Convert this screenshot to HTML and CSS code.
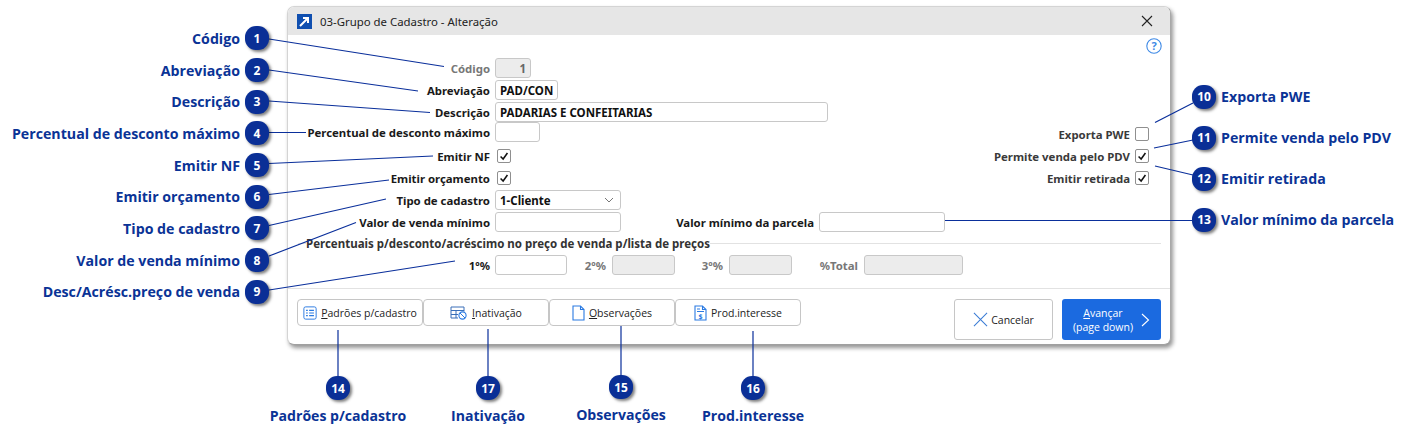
FILE: index.html
```html
<!DOCTYPE html>
<html lang="pt">
<head>
<meta charset="utf-8">
<title>03-Grupo de Cadastro</title>
<link rel="stylesheet" href="styles.css">
</head>
<body>
<main class="canvas">
  <section class="dialog">
    <header class="titlebar">
      <svg class="app-icon" viewBox="0 0 15 15"><rect width="15" height="15" fill="#0f4fb0"/><path d="M3 12 L10.5 4.5 M6 4 H11 V9" stroke="#fff" stroke-width="2" fill="none"/></svg>
      <span class="title">03-Grupo de Cadastro - Alteração</span>
      <svg class="close" viewBox="0 0 12 12"><path d="M1 1 L11 11 M11 1 L1 11" stroke="#222" stroke-width="1.1" fill="none"/></svg>
    </header>
    <div class="helpbar">
      <svg class="help" viewBox="0 0 16 16"><circle cx="8" cy="8" r="7.2" fill="none" stroke="#3f8ae6" stroke-width="1.1"/><text x="8" y="11.5" text-anchor="middle" class="help-q">?</text></svg>
    </div>
    <form class="form">
      <div class="row r-code"><label class="lbl muted">Código</label><span class="input w-code disabled num">1</span></div>
      <div class="row r-abr"><label class="lbl">Abreviação</label><span class="input w-abr">PAD/CON</span></div>
      <div class="row r-des"><label class="lbl">Descrição</label><span class="input w-des">PADARIAS E CONFEITARIAS</span></div>
      <div class="row r-per">
        <label class="lbl">Percentual de desconto máximo</label><span class="input w-per"></span>
        <div class="side"><label class="lbl-side">Exporta PWE</label><span class="check"></span></div>
      </div>
      <div class="row r-chk">
        <label class="lbl">Emitir NF</label><span class="check left on"><svg viewBox="0 0 14 14"><path d="M3 7.5 L6 10.5 L11 3.5" stroke="#111" stroke-width="1.8" fill="none"/></svg></span>
        <div class="side"><label class="lbl-side">Permite venda pelo PDV</label><span class="check on"><svg viewBox="0 0 14 14"><path d="M3 7.5 L6 10.5 L11 3.5" stroke="#111" stroke-width="1.8" fill="none"/></svg></span></div>
      </div>
      <div class="row r-chk">
        <label class="lbl">Emitir orçamento</label><span class="check left on"><svg viewBox="0 0 14 14"><path d="M3 7.5 L6 10.5 L11 3.5" stroke="#111" stroke-width="1.8" fill="none"/></svg></span>
        <div class="side"><label class="lbl-side">Emitir retirada</label><span class="check on"><svg viewBox="0 0 14 14"><path d="M3 7.5 L6 10.5 L11 3.5" stroke="#111" stroke-width="1.8" fill="none"/></svg></span></div>
      </div>
      <div class="row r-sel"><label class="lbl">Tipo de cadastro</label><span class="input w-sel select">1-Cliente<svg class="caret" viewBox="0 0 10 6"><path d="M1 1 L5 5 L9 1" stroke="#777" fill="none"/></svg></span></div>
      <div class="row r-val">
        <label class="lbl">Valor de venda mínimo</label><span class="input w-sel"></span>
        <label class="lbl lbl-parc">Valor mínimo da parcela</label><span class="input w-sel"></span>
      </div>
      <fieldset class="group">
        <legend class="group-title">Percentuais p/desconto/acréscimo no preço de venda p/lista de preços</legend>
      </fieldset>
      <div class="row r-pct">
        <label class="lbl">1º%</label><span class="input w-p1"></span>
        <label class="lbl-p muted l2">2º%</label><span class="input w-p2 disabled"></span>
        <label class="lbl-p muted l3">3º%</label><span class="input w-p2 disabled"></span>
        <label class="lbl-p muted l4">%Total</label><span class="input w-p4 disabled"></span>
      </div>
    </form>
    <footer class="footer">
      <div class="tabs">
        <button type="button" class="tab"><svg class="ico" viewBox="0 0 16 16"><rect x="1" y="1" width="14" height="14" rx="2" fill="none" stroke="#2a7ae2" stroke-width="1.1"/><path d="M3.5 5h2M3.5 8h2M3.5 11h2M7 5h5.5M7 8h5.5M7 11h5.5" stroke="#2a7ae2" stroke-width="1.3"/></svg><span><u>P</u>adrões p/cadastro</span></button>
        <button type="button" class="tab"><svg class="ico wide" viewBox="0 0 18 14"><path d="M1 1h13v4.500M1 1v11h7M1 4.500h13M1 8.500h7M6 4.500v7.500" stroke="#3a6fb8" fill="none"/><circle cx="12.500" cy="9.500" r="3.600" fill="#fff" stroke="#2a7ae2" stroke-width="1.100"/><path d="M10 7l5 5" stroke="#2a7ae2"/></svg><span><u>I</u>nativação</span></button>
        <button type="button" class="tab"><svg class="ico tall" viewBox="0 0 13 16"><path d="M1 1h7.500L12 4.500V15H1z M8.500 1v3.500H12" fill="none" stroke="#2a7ae2" stroke-width="1.100"/></svg><span><u>O</u>bservações</span></button>
        <button type="button" class="tab"><svg class="ico tall" viewBox="0 0 13 16"><path d="M1 1h7.500L12 4.500V15H1z M8.500 1v3.500H12" fill="none" stroke="#2a7ae2" stroke-width="1.100"/><path d="M3 4h3M3 6.500h7" stroke="#2a7ae2"/><text x="6.500" y="14" text-anchor="middle" class="ico-dollar">$</text></svg><span>Prod.interesse</span></button>
      </div>
      <div class="actions">
        <button type="button" class="btn cancel"><svg class="x" viewBox="0 0 16 16"><path d="M1 1 L15 15 M15 1 L1 15" stroke="#3a7bd5" stroke-width="1.100" fill="none"/></svg><span>Cancelar</span></button>
        <button type="button" class="btn next"><span class="next-text"><u>A</u>vançar<br>(page down)</span><svg class="chev" viewBox="0 0 9 14"><path d="M1 1 L7.500 7 L1 13" stroke="#fff" stroke-width="1.100" fill="none"/></svg></button>
      </div>
    </footer>
  </section>

  <svg class="leaders" viewBox="0 0 1410 442">
    <path d="M269 39 L444 66.500M269 70 L418 91M269 101 L430 112.500M269 132.500 L306 132.500M269 163.500 L433 156M269 194.500 L389 180M269 225.500 L386 199M269 256 L356 222.500M269 290 L455 261M1155 122.500 L1193 103M1154 148 L1193 140M1155 166 L1193 175M945 220.500 L1193 220.500M338 330 L338 378M488 329 L488 378M621 326 L621 378M753 331 L753 378"/>
  </svg>

  <ul class="callouts left-col">
    <li class="callout"><span class="name">Código</span><b class="badge">1</b></li>
    <li class="callout"><span class="name">Abreviação</span><b class="badge">2</b></li>
    <li class="callout"><span class="name">Descrição</span><b class="badge">3</b></li>
    <li class="callout"><span class="name">Percentual de desconto máximo</span><b class="badge">4</b></li>
    <li class="callout"><span class="name">Emitir NF</span><b class="badge">5</b></li>
    <li class="callout"><span class="name">Emitir orçamento</span><b class="badge">6</b></li>
    <li class="callout"><span class="name">Tipo de cadastro</span><b class="badge">7</b></li>
    <li class="callout"><span class="name">Valor de venda mínimo</span><b class="badge">8</b></li>
    <li class="callout"><span class="name">Desc/Acrésc.preço de venda</span><b class="badge">9</b></li>
  </ul>
  <ul class="callouts right-col">
    <li class="callout"><b class="badge">10</b><span class="name">Exporta PWE</span></li>
    <li class="callout"><b class="badge">11</b><span class="name">Permite venda pelo PDV</span></li>
    <li class="callout"><b class="badge">12</b><span class="name">Emitir retirada</span></li>
    <li class="callout"><b class="badge">13</b><span class="name">Valor mínimo da parcela</span></li>
  </ul>
  <div class="stack s14"><b class="badge">14</b><span class="name">Padrões p/cadastro</span></div>
  <div class="stack s17"><b class="badge">17</b><span class="name">Inativação</span></div>
  <div class="stack s15"><b class="badge">15</b><span class="name">Observações</span></div>
  <div class="stack s16"><b class="badge">16</b><span class="name">Prod.interesse</span></div>
</main>
</body>
</html>
```
FILE: styles.css
```css
* { box-sizing: border-box; }
html, body { margin: 0; padding: 0; background: #fff; }
.canvas { position: relative; width: 1410px; height: 442px; overflow: hidden; font-family: "Noto Sans", sans-serif; }

/* dialog */
.dialog { position: absolute; left: 287px; top: 6px; width: 884px; height: 339px; background: #fff; border: 1px solid #d4d4d4; border-right-color: #a8a8a8; border-bottom-color: #a0a0a0; border-radius: 7px; box-shadow: 2px 3px 4px rgba(0,0,0,.42); display: flex; flex-direction: column; overflow: hidden; }
.titlebar { height: 28px; flex: none; background: #e6e6e6; display: flex; align-items: center; padding: 0 16px 0 9px; }
.app-icon { width: 15px; height: 15px; margin-right: 8px; }
.title { font-family: "Noto Sans", sans-serif; font-size: 11.4px; color: #222; flex: 1; }
.close { width: 12px; height: 12px; margin-right: 1px; }
.helpbar { height: 20px; flex: none; display: flex; justify-content: flex-end; align-items: center; padding: 2px 8px 0 0; }
.help { width: 16px; height: 16px; }
.help-q { font: 700 11px "Noto Sans", sans-serif; fill: #3f8ae6; }

/* form */
.form { flex: none; height: 234px; padding-top: 2px; display: flex; flex-direction: column; border-bottom: 1px solid #e2e2e2; }
.row { display: flex; align-items: center; height: 22px; flex: none; }
.lbl { width: 207px; padding-right: 5px; text-align: right; flex: none; font-size: 11.4px; font-weight: 700; color: #1a1a1a; white-space: nowrap; }
.muted { color: #777; }
.input { height: 20px; border: 1px solid #c8c8c8; border-radius: 3px; background: #fff; display: flex; align-items: center; padding: 0 4px; font-size: 11.5px; font-weight: 700; color: #111; flex: none; white-space: nowrap; }
.disabled { background: #ececec; }
.num { justify-content: flex-end; color: #666; }
.w-code { width: 36px; }
.w-abr { width: 63px; }
.w-des { width: 333px; }
.w-per { width: 45px; margin-top: -4px; }
.r-per .lbl { margin-top: -4px; }
.w-sel { width: 126px; }
.select { justify-content: space-between; padding-right: 6px; }
.caret { width: 10px; height: 6px; }
.check { width: 14px; height: 14px; border: 1px solid #8f8f8f; border-radius: 2px; display: block; flex: none; background: #fff; }
.check svg { display: block; width: 12px; height: 12px; }
.check.left { margin-left: 2px; }
.side { margin-left: auto; margin-right: 21px; display: flex; align-items: center; gap: 5px; }
.lbl-side { font-size: 11.4px; font-weight: 700; color: #3a3a3a; white-space: nowrap; }
.lbl-parc { width: 198px; }
.group { margin: 3px 9px 0 10px; padding: 0; border: 0; border-top: 1px solid #e2e2e2; height: 18px; min-width: 0; }
.group-title { padding: 0; margin: 0 0 0 8px; font-size: 11.5px; font-weight: 700; color: #333; }
.w-p1 { width: 72px; }
.w-p2 { width: 63px; }
.w-p4 { width: 99px; }
.lbl-p { font-size: 11.4px; font-weight: 700; white-space: nowrap; text-align: right; padding-right: 6px; flex: none; }
.l2 { width: 45px; }
.l3 { width: 54px; }
.l4 { width: 72px; }

/* footer */
.footer { flex: 1; display: flex; justify-content: space-between; padding: 10px 9px 0 9px; align-items: flex-start; }
.tabs { display: flex; }
.tab { width: 126px; height: 27px; border: 1px solid #c6c6c6; border-radius: 4px; background: #fff; display: flex; align-items: center; justify-content: center; gap: 4px; padding: 0; font-family: "Open Sans", sans-serif; font-size: 10.5px; color: #222; }
.ico { width: 14px; height: 14px; flex: none; }
.ico.wide { width: 18px; height: 14px; }
.ico.tall { width: 13px; height: 16px; }
.ico-dollar { font: 700 7px "Noto Sans", sans-serif; fill: #2a7ae2; }
.actions { display: flex; gap: 9px; }
.btn { height: 41px; border-radius: 3px; display: flex; align-items: center; font-family: "Open Sans", sans-serif; font-size: 10.5px; padding: 0; }
.cancel { width: 99px; background: #fff; border: 1px solid #c6c6c6; color: #222; justify-content: center; gap: 3px; }
.x { width: 15px; height: 15px; }
.next { width: 99px; background: #1b6ae0; border: 0; color: #fff; justify-content: center; gap: 8px; }
.next-text { line-height: 14px; text-align: center; }
.chev { width: 9px; height: 14px; }

/* annotations */
.leaders { position: absolute; left: 0; top: 0; width: 1410px; height: 442px; fill: none; stroke: #0a2f9b; stroke-width: 1.2; pointer-events: none; }
.callouts { list-style: none; margin: 0; padding: 0; position: absolute; display: flex; flex-direction: column; }
.left-col { right: 1141px; top: 22.5px; }
.right-col { left: 1192px; top: 76px; }
.callout { display: flex; align-items: center; gap: 5px; height: 31.7px; }
.left-col .callout { justify-content: flex-end; }
.right-col .callout { height: 41px; }
.name { font-family: "Open Sans", sans-serif; font-weight: 700; font-size: 14.2px; color: #0a3396; white-space: nowrap; }
.badge { width: 24px; height: 24px; border-radius: 11px; background: #0a2f96; color: #fff; display: flex; align-items: center; justify-content: center; font-family: "Open Sans", sans-serif; font-size: 12px; font-weight: 700; box-shadow: 2px 2px 3px rgba(0,0,0,.5); flex: none; }
.stack { position: absolute; top: 376px; width: 160px; display: flex; flex-direction: column; align-items: center; gap: 6px; }
.s14 { left: 258px; }
.s17 { left: 408px; }
.s15 { left: 541px; top: 375px; }
.s16 { left: 673px; }
.stack .name { font-size: 14.1px; }
```
